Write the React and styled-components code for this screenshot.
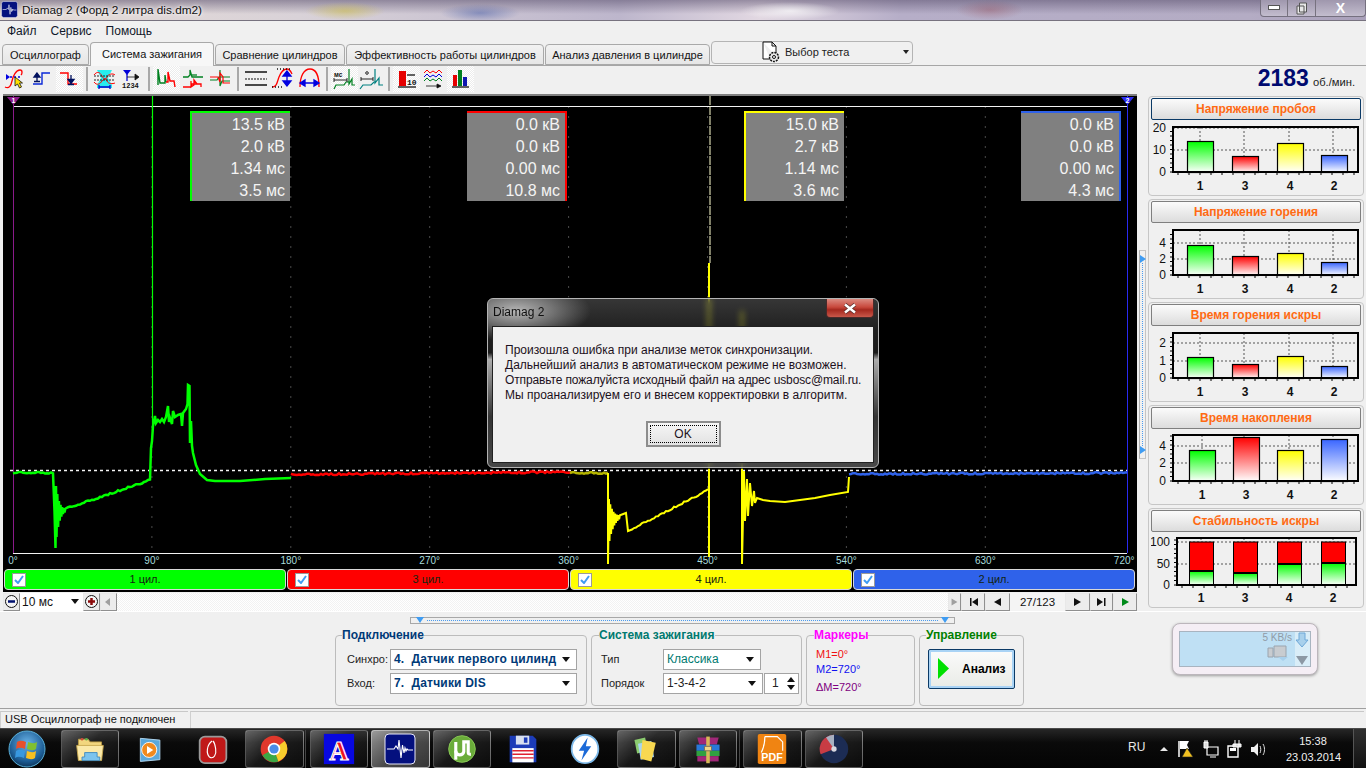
import React from "react";
import styled, { createGlobalStyle } from "styled-components";

const GlobalStyle = createGlobalStyle`
  html, body {
    margin: 0;
    padding: 0;
    overflow: hidden;
    background: #f0f0f0;
    font-family: "Liberation Sans", Arial, sans-serif;
    font-size: 12px;
    color: #111;
  }
  * { box-sizing: border-box; }
`;

const Page = styled.div`
  position: relative;
  width: 1366px;
  height: 768px;
  overflow: hidden;
  display: flex;
  flex-direction: column;
  background: #f0f0f0;
`;

/* ---------- title bar ---------- */
const TitleBar = styled.div`
  height: 21px;
  display: flex;
  align-items: center;
  padding-left: 1px;
  background:
    radial-gradient(ellipse 34px 10px at 990px 10px, rgba(150, 70, 80, 0.35), transparent),
    radial-gradient(ellipse 40px 9px at 345px 11px, rgba(205, 190, 90, 0.65), transparent),
    radial-gradient(ellipse 40px 9px at 480px 13px, rgba(80, 100, 170, 0.55), transparent),
    radial-gradient(ellipse 50px 9px at 790px 11px, rgba(255, 255, 255, 0.7), transparent),
    linear-gradient(180deg, rgba(90, 80, 110, 0.55), rgba(255, 255, 255, 0) 70%),
    linear-gradient(90deg, #e6dcd6 0, #d9d2d8 300px, #bdb6cc 620px, #e2d8e2 760px, #b6aec8 900px, #b4acc4 1250px, #a9a0ba 1366px);
  border-bottom: 1px solid #77727f;
`;
const AppIcon = styled.div`
  flex: none;
  display: flex;
  margin-right: 4px;
`;
const TitleText = styled.div`
  font-size: 11.8px;
  color: #101010;
  text-shadow: 0 0 6px #fff, 0 0 3px #fff;
`;
const WindowButtons = styled.div`
  margin-left: auto;
  align-self: flex-start;
  display: flex;
  height: 17px;
  width: 106px;
  border: 1px solid #75707f;
  border-top: 0;
  border-radius: 0 0 4px 4px;
  background: linear-gradient(180deg, #9f97ad, #c3bdce);
`;
const WindowButton = styled.div`
  width: ${({ $w }) => $w}px;
  display: flex;
  align-items: center;
  justify-content: center;
  border-right: 1px solid #77727f;
  color: #fff;
  font-size: 14px;
  font-weight: bold;
  &:last-child { border-right: 0; }
`;

/* ---------- menu, tabs ---------- */
const MenuBar = styled.div`
  height: 21px;
  display: flex;
  align-items: center;
  gap: 14px;
  padding-left: 7px;
  font-size: 12px;
  color: #10182a;
`;
const TabRow = styled.div`
  height: 24px;
  padding-left: 2px;
  display: flex;
  align-items: flex-end;
  border-bottom: 1px solid #a6a6a6;
`;
const Tab = styled.div`
  width: ${({ $w }) => $w}px;
  height: ${({ $active }) => ($active ? 24 : 21)}px;
  margin-right: 1px;
  margin-bottom: ${({ $active }) => ($active ? -1 : 0)}px;
  padding-top: ${({ $active }) => ($active ? 0 : 2)}px;
  display: flex;
  align-items: center;
  justify-content: center;
  font-size: 11px;
  white-space: nowrap;
  color: #141414;
  border: 1px solid #a9a9a9;
  border-bottom: ${({ $active }) => ($active ? "0" : "1px solid #a9a9a9")};
  border-radius: 4px 4px 0 0;
  background: ${({ $active }) => ($active ? "#f7f7f7" : "linear-gradient(180deg, #f2f2f2, #e6e6e6)")};
`;
const TestSelect = styled.div`
  width: 202px;
  height: 23px;
  margin-bottom: 1px;
  display: flex;
  align-items: center;
  padding-left: 48px;
  padding-right: 3px;
  gap: 3px;
  font-size: 11px;
  color: #222;
  background: #f0f0f0;
  border: 1px solid #b4b4b4;
  border-radius: 4px;
`;
const TinyArrow = styled.span`
  margin-left: auto;
  width: 0;
  height: 0;
  border-left: 3px solid transparent;
  border-right: 3px solid transparent;
  border-top: 4px solid #222;
`;

/* ---------- toolbar ---------- */
const ToolRow = styled.div`
  height: 28px;
  display: flex;
  align-items: center;
  padding: 0 0 2px 2px;
`;
const ToolButton = styled.div`
  flex: none;
  width: 27px;
  height: 26px;
  display: flex;
  align-items: center;
  justify-content: center;
  background: ${({ $on }) => ($on ? "repeating-conic-gradient(#ffffff 0 25%, #ececec 0 50%) 0 0 / 2px 2px" : "transparent")};
`;
const ToolSep = styled.div`
  flex: none;
  width: 2px;
  height: 24px;
  margin: 0 3px;
  background: #a8a8a8;
`;
const Rpm = styled.div`
  margin-left: auto;
  margin-right: 11px;
  display: flex;
  align-items: baseline;
  gap: 4px;
  font-size: 11.2px;
  color: #222;
`;
const RpmValue = styled.span`
  font-size: 23px;
  font-weight: bold;
  color: #000a70;
`;

/* ---------- work area ---------- */
const Workspace = styled.div`
  height: 517px;
  display: flex;
`;
const LeftColumn = styled.div`
  width: 1139px;
  padding-left: 3px;
  padding-right: 2px;
  display: flex;
  flex-direction: column;
`;
const ScopeFrame = styled.div`
  border-top: 2px solid #808080;
  background: #000;
`;
const ScopeCanvas = styled.div`
  position: relative;
  height: 471px;
  svg { display: block; }
`;
const ValueGrid = styled.div`
  position: absolute;
  left: 187px;
  top: 15px;
  display: grid;
  grid-template-columns: repeat(4, 100px);
  column-gap: 177px;
`;
const ValueBox = styled.div`
  height: 90px;
  padding: 1px 5px 0 0;
  background: #808080;
  color: #f4f4f4;
  font-size: 16px;
  line-height: 22px;
  text-align: right;
  border-top: 2px solid ${({ $color }) => $color};
  border-${({ $side }) => $side}: 2px solid ${({ $color }) => $color};
`;
const CylinderStrip = styled.div`
  height: 25px;
  display: flex;
  gap: 1px;
  padding: 2px 2px 2px 1px;
`;
const Cylinder = styled.div`
  position: relative;
  flex: 1;
  display: flex;
  align-items: center;
  justify-content: center;
  font-size: 11px;
  color: #14240f;
  background: ${({ $color }) => $color};
  border: 1px solid #d8d8d8;
  border-radius: 4px;
`;
const CheckBox = styled.div`
  position: absolute;
  left: 7px;
  top: 3px;
  width: 14px;
  height: 14px;
  display: flex;
  align-items: center;
  justify-content: center;
  background: #fff;
  border: 1px solid #9a9a9a;
`;
const ControlRow = styled.div`
  height: 18px;
  margin-top: 1px;
  display: flex;
  align-items: stretch;
`;
const SquareButton = styled.div`
  flex: none;
  width: ${({ $w }) => $w || 17}px;
  display: flex;
  align-items: center;
  justify-content: center;
  background: #ececec;
  border: 1px solid;
  border-color: #e8e8e8 #8f8f8f #8f8f8f #e8e8e8;
`;
const ScaleSelect = styled.div`
  flex: none;
  width: 63px;
  display: flex;
  align-items: center;
  justify-content: space-between;
  padding: 0 4px 0 2px;
  background: #fff;
  font-size: 12px;
`;
const Track = styled.div`
  flex: 1;
  background: repeating-conic-gradient(#ffffff 0 25%, #f2f2f2 0 50%) 0 0 / 2px 2px;
`;
const Counter = styled.div`
  flex: none;
  width: 55px;
  display: flex;
  align-items: center;
  justify-content: center;
  font-size: 11.5px;
  background: #f4f4f4;
`;
const DownArrow = styled.span`
  display: inline-block;
  width: 0;
  height: 0;
  flex: none;
  border-left: 4px solid transparent;
  border-right: 4px solid transparent;
  border-top: 5px solid #111;
`;

/* ---------- vertical splitter ---------- */
const SideSplitter = styled.div`
  flex: none;
  width: 7px;
  height: 209px;
  margin-top: 156px;
  padding-top: 4px;
  border: 1px solid #c4c4c4;
  border-left: 1px solid #b0b0b0;
  display: flex;
  flex-direction: column;
  align-items: center;
  justify-content: space-between;
  padding-bottom: 4px;
`;
const SideDots = styled.div`
  flex: 1;
  width: 1px;
  border-left: 1px dotted #4a9cf0;
`;

/* ---------- right charts ---------- */
const ChartColumn = styled.div`
  flex: none;
  width: 216px;
  margin-left: 2px;
  margin-top: 2px;
  display: flex;
  flex-direction: column;
  gap: 3px;
`;
const ChartPanel = styled.div`
  height: 100px;
  padding: 1px 2px 0;
  border: 1px solid #c6c6c6;
  border-radius: 4px;
  svg { display: block; margin-top: 1px; }
`;
const ChartTitle = styled.div`
  height: 22px;
  display: flex;
  align-items: center;
  justify-content: center;
  font-size: 12px;
  font-weight: bold;
  color: #ff6a13;
  background: linear-gradient(180deg, #fbfbfb, #dcdcdc);
  border: 1px solid ${({ $focus }) => ($focus ? "#0b3a66" : "#7f7f7f")};
  border-radius: 2px;
`;

/* ---------- bottom settings ---------- */
const BottomArea = styled.div`
  height: 98px;
  border-top: 1px solid #fff;
  padding-left: 335px;
  display: flex;
  flex-direction: column;
`;
const HSplitter = styled.div`
  width: 545px;
  height: 7px;
  margin: 5px 0 0 75px;
  padding: 0 5px;
  display: flex;
  align-items: center;
  gap: 3px;
  border: 1px solid #a8a8a8;
  background: #f0f0f0;
`;
const HDots = styled.div`
  flex: 1;
  height: 1px;
  border-top: 1px dotted #4a9cf0;
`;
const Groups = styled.div`
  display: flex;
  gap: 4px;
  margin-top: 5px;
`;
const Group = styled.fieldset`
  width: ${({ $w }) => $w}px;
  height: 77px;
  margin: 0;
  padding: ${({ $pad }) => $pad};
  border: 1px solid #bcbcbc;
  border-radius: 4px;
  min-width: 0;
`;
const GroupLegend = styled.legend`
  padding: 0;
  margin-left: ${({ $ml }) => $ml}px;
  font-size: 12px;
  line-height: 13px;
  font-weight: bold;
  color: ${({ $color }) => $color};
`;
const FieldRow = styled.div`
  display: flex;
  align-items: center;
  height: 21px;
  margin-bottom: 3px;
  font-size: 11px;
  color: #222;
`;
const FieldLabel = styled.div`
  flex: none;
  width: ${({ $w }) => $w}px;
`;
const SelectBox = styled.div`
  flex: none;
  width: ${({ $w }) => $w}px;
  height: 21px;
  display: flex;
  align-items: center;
  justify-content: space-between;
  padding: 0 6px 0 3px;
  background: #fff;
  border: 1px solid #a4a4a4;
  font-size: 12px;
  font-weight: ${({ $bold }) => ($bold ? "bold" : "normal")};
  letter-spacing: ${({ $bold }) => ($bold ? "0.2px" : "0")};
  color: ${({ $color }) => $color || "#222"};
  white-space: pre;
  overflow: hidden;
`;
const SpinBox = styled.div`
  flex: none;
  width: 35px;
  height: 21px;
  margin-left: 1px;
  display: flex;
  align-items: center;
  justify-content: space-between;
  padding: 0 3px 0 7px;
  font-size: 12px;
  background: #fff;
  border: 1px solid #a4a4a4;
`;
const SpinArrows = styled.div`
  display: flex;
  flex-direction: column;
  gap: 3px;
`;
const UpArrow = styled.span`
  display: block;
  width: 0;
  height: 0;
  border-left: 4px solid transparent;
  border-right: 4px solid transparent;
  border-bottom: 5px solid #111;
`;
const MarkerLine = styled.div`
  font-size: 11px;
  height: ${({ $h }) => $h}px;
  color: ${({ $color }) => $color};
`;
const RunButton = styled.div`
  width: 87px;
  height: 40px;
  display: flex;
  align-items: center;
  gap: 13px;
  padding-left: 9px;
  font-size: 12px;
  font-weight: bold;
  color: #000;
  background: linear-gradient(180deg, #fbfbfb, #e9ebe6);
  border: 1px solid #0b3a66;
  border-radius: 2px;
  box-shadow: inset 0 0 0 2px #a9d3f5;
`;

/* ---------- status ---------- */
const StatusBar = styled.div`
  height: 20px;
  display: flex;
  align-items: flex-end;
  border-top: 1px solid #a0a0a0;
  font-size: 11px;
  color: #111;
`;
const StatusCell = styled.div`
  width: ${({ $w }) => $w}px;
  height: 17px;
  padding-left: 4px;
  border-left: 1px solid #d0d0d0;
  border-top: 1px solid #c8c8c8;
  margin-right: 2px;
  line-height: 15px;
  white-space: nowrap;
  flex: ${({ $w }) => ($w ? "none" : "1")};
`;

/* ---------- taskbar ---------- */
const Taskbar = styled.div`
  height: 40px;
  padding-left: 59px;
  display: flex;
  align-items: center;
  position: relative;
  color: #fff;
  background: linear-gradient(180deg, #262626 0, #0a0a0a 35%, #040404 100%);
  border-top: 1px solid #4a4a4a;
`;
const StartOrb = styled.svg`
  position: absolute;
  left: 7px;
  top: 0;
`;
const TaskItem = styled.div`
  flex: none;
  width: 58.5px;
  height: 38px;
  margin: 0 1.5px;
  display: flex;
  align-items: center;
  justify-content: center;
  border-radius: 3px;
  ${({ $state }) =>
    $state === "open" &&
    `background: linear-gradient(135deg, rgba(255,255,255,.3), rgba(255,255,255,.08) 45%, rgba(255,255,255,.03));
     border: 1px solid rgba(255,255,255,.28);`}
  ${({ $state }) =>
    $state === "active" &&
    `background: linear-gradient(135deg, rgba(255,255,255,.55), rgba(255,255,255,.28) 50%, rgba(255,255,255,.2));
     border: 1px solid rgba(255,255,255,.55);`}
`;
const TaskGap = styled.div`
  flex: none;
  width: 3px;
  height: 38px;
  border-left: 1px solid #444;
`;
const Tray = styled.div`
  margin-left: auto;
  height: 100%;
  display: flex;
  align-items: center;
`;
const TrayLang = styled.div`
  width: 27px;
  font-size: 12px;
  margin-bottom: 4px;
  color: #e8e8e8;
`;
const TrayIcons = styled.div`
  display: flex;
  align-items: center;
  gap: 7px;
  margin-left: 4px;
`;
const Clock = styled.div`
  width: 54px;
  margin-left: 20px;
  text-align: center;
  font-size: 11px;
  line-height: 16px;
  color: #f0f0f0;
`;
const ShowDesktop = styled.div`
  width: 13px;
  height: 100%;
  margin-left: 13px;
  border-left: 1px solid #555;
  background: linear-gradient(180deg, #303030, #111);
`;

/* ---------- floating things ---------- */
const NetWidget = styled.div`
  position: absolute;
  left: 1172px;
  top: 623px;
  width: 146px;
  height: 52px;
  padding: 7px 6px;
  background: #f5eef5;
  border: 1px solid #bcb6bc;
  border-radius: 8px;
  box-shadow: 0 1px 3px rgba(0, 0, 0, 0.35);
  display: flex;
`;
const NetScreen = styled.div`
  flex: 1;
  display: flex;
  flex-direction: column;
  align-items: flex-end;
  padding: 0 3px;
  background: #bfe0f4;
  border: 1px solid #a8b4c0;
  border-right: 0;
  font-size: 10px;
  color: #8f9aa6;
`;
const NetSide = styled.div`
  width: 16px;
  display: flex;
  flex-direction: column;
  justify-content: space-between;
  background: #d9edf8;
  border: 1px solid #a8b4c0;
  border-left: 0;
`;

const Dialog = styled.div`
  position: absolute;
  left: 487px;
  top: 298px;
  width: 392px;
  height: 170px;
  padding: 0 4px 4px;
  display: flex;
  flex-direction: column;
  border: 1px solid #b4b4b4;
  border-radius: 6px;
  backdrop-filter: blur(3px);
  background:
    radial-gradient(ellipse 75px 30px at 28px 12px, rgba(190, 190, 190, 0.95), rgba(140, 140, 140, 0.5) 65%, transparent),
    linear-gradient(180deg, rgba(120, 120, 120, 0.45) 0, rgba(60, 60, 60, 0.55) 18%, rgba(60, 60, 60, 0.45) 32%, rgba(215, 215, 215, 0.8) 36%, rgba(70, 70, 70, 0.75) 70%, rgba(90, 90, 90, 0.8) 100%);
  box-shadow: 0 0 0 1px rgba(0, 0, 0, 0.7);
`;
const DialogHead = styled.div`
  height: 27px;
  display: flex;
  align-items: flex-start;
`;
const DialogTitle = styled.div`
  padding: 6px 0 0 1px;
  font-size: 12px;
  color: #101010;
`;
const DialogClose = styled.div`
  margin-left: auto;
  width: 48px;
  height: 19px;
  display: flex;
  align-items: center;
  justify-content: center;
  background: linear-gradient(180deg, #dc8a80 0, #c8483c 45%, #a5281e 60%, #c8584a 100%);
  border: 1px solid #4a2a2a;
  border-top: 0;
  border-radius: 0 0 4px 4px;
`;
const DialogBody = styled.div`
  flex: 1;
  padding: 16px 0 0 12px;
  display: flex;
  flex-direction: column;
  background: #f0f0f0;
  border: 1px solid #222;
  color: #1c1020;
  font-size: 12px;
  line-height: 15px;
`;
const DialogLine = styled.div`
  white-space: nowrap;
  letter-spacing: ${({ $tight }) => ($tight ? "-0.13px" : "0")};
`;
const OkButton = styled.div`
  align-self: center;
  width: 75px;
  height: 26px;
  margin: 18px 0 0 -12px;
  display: flex;
  align-items: center;
  justify-content: center;
  background: linear-gradient(180deg, #f6f6f6, #e2e2e2);
  border: 2px solid #8c8c8c;
  outline: 1px dotted #000;
  outline-offset: -5px;
  font-size: 12px;
`;

/* ---------- drawings ---------- */
const GREEN = "#00ff00";
const RED = "#ff0000";
const YELLOW = "#ffff00";
const BLUE = "#2f62ea";

const ring = (x0, x1, cy0, cy1, amp, decay) => {
  const pts = [];
  let sign = 1;
  for (let x = x0; x <= x1; x += 0.8) {
    const t = (x - x0) / (x1 - x0);
    pts.push([x, cy0 + (cy1 - cy0) * t + sign * amp * Math.exp(-decay * t)]);
    sign = -sign;
  }
  return pts;
};
const fuzz = (x0, x1, y0, y1, seed) => {
  const pts = [];
  for (let x = x0, i = seed; x <= x1; x += 2, i++) {
    pts.push([x, y0 + ((y1 - y0) * (x - x0)) / (x1 - x0) + Math.sin(i * i * 0.7) * 0.8]);
  }
  return pts;
};
const toPts = (pts) => pts.map((p) => p.join(",")).join(" ");

const greenTrace = [
  ...fuzz(13, 54, 471.7, 471.7, 1),
  [54.5, 510],
  [55.5, 547],
  [56, 485],
  ...ring(56.5, 66, 512, 509, 24, 3),
  ...fuzz(68, 150, 507, 479, 4),
  [151, 447], [152, 440], [153, 425],
  [155, 415], [156, 422], [158, 419], [160, 421], [162, 418], [164, 421], [166, 416],
  [168, 405], [169, 421], [170, 417], [172, 423], [173, 410], [175, 416], [178, 414],
  [181, 413], [182, 425], [183, 412], [186, 408], [187.5, 403], [188, 384], [189.5, 385],
  [190, 442], [191, 420], [192, 445], [193, 452], [196, 464], [200, 473], [207, 479],
  [215, 480], [240, 480], [265, 478], [291, 477],
];
const yellowTrace = [
  [608, 472], [608, 563], [609, 498],
  ...ring(609.5, 620, 520, 516, 20, 2.5),
  [626, 512], [628, 530],
  ...fuzz(630, 708, 529, 489, 7),
];
const yellowTrace2 = [
  [742, 310], [742, 563], [744, 470], [745, 520], [747, 478], [748, 515], [750, 482],
  [752, 505], [754, 490], [755, 502], [757, 497], [763, 499], [770, 500], [785, 501],
  [800, 499], [815, 497], [830, 494], [848, 491], [849, 476],
];

const ScopeDrawing = () => {
  const ticks = [0, 1, 2, 3, 4, 5, 6, 7, 8];
  return (
    <svg width="1134" height="471" viewBox="3 95 1134 471">
      {ticks.slice(1, 8).map((i) => (
        <line key={i} x1={13 + i * 138.9} x2={13 + i * 138.9} y1="105" y2="552" stroke="#4a4a4a" strokeDasharray="2 8" />
      ))}
      <line x1="13" x2="1127" y1="105.5" y2="105.5" stroke="#f2f2f2" />
      <line x1="13" x2="1127" y1="552.5" y2="552.5" stroke="#f2f2f2" />
      <line x1="13.5" x2="13.5" y1="95" y2="552" stroke="#8a1a8a" />
      <line x1="1127.5" x2="1127.5" y1="95" y2="552" stroke="#2a2af0" />
      <line x1="710" x2="710" y1="95" y2="262" stroke="#ffffd0" strokeDasharray="9 1" />
      <line x1="152.5" x2="152.5" y1="95" y2="430" stroke={GREEN} strokeWidth="1.2" />
      <line x1="10" x2="1127" y1="469.5" y2="469.5" stroke="#f4f4f4" strokeWidth="1.6" strokeDasharray="3 3" />
      <polygon points="7,96 20,96 13.5,104" fill="#8a1a8a" />
      <polygon points="1121,96 1134,96 1127.5,104" fill="#2a2af0" />
      <text x="13.5" y="102" fontSize="7" fontWeight="bold" fill="#fff" textAnchor="middle">1</text>
      <text x="1127.5" y="102" fontSize="7" fontWeight="bold" fill="#fff" textAnchor="middle">2</text>

      <polyline points={toPts(fuzz(291, 572, 473.5, 471, 5))} fill="none" stroke={RED} strokeWidth="2.5" />
      <polyline points={toPts(fuzz(570, 608, 472, 472, 3))} fill="none" stroke="#b4b400" strokeWidth="2.5" />
      <polyline points={toPts(fuzz(849, 1127, 473, 472, 2))} fill="none" stroke={BLUE} strokeWidth="2.5" />
      <polyline points={toPts(greenTrace)} fill="none" stroke={GREEN} strokeWidth="2.5" />
      <polyline points={toPts(yellowTrace)} fill="none" stroke={YELLOW} strokeWidth="2" />
      <line x1="709" x2="709" y1="262" y2="556" stroke={YELLOW} strokeWidth="2" />
      <polyline points={toPts(yellowTrace2)} fill="none" stroke={YELLOW} strokeWidth="2" />

      {ticks.map((i) => (
        <text key={i} x={13 + i * 138.9} y="563" fontSize="10" fill="#a8dcdc" textAnchor="middle">
          {i * 90}°
        </text>
      ))}
    </svg>
  );
};

const BarGradients = () => (
  <defs>
    {[["g", "#00ff00"], ["r", "#ff0000"], ["y", "#ffff00"], ["b", "#3a66ff"]].map(([id, c]) => (
      <linearGradient key={id} id={`bar-${id}`} x1="0" y1="0" x2="0" y2="1">
        <stop offset="0" stopColor={c} />
        <stop offset="1" stopColor="#ffffff" />
      </linearGradient>
    ))}
  </defs>
);

const Chart = ({ plot, yTicks, gridX, bars, stacked }) => {
  const { left, right, top, bottom } = plot;
  const minor = [];
  for (let y = bottom; y > top; y -= 4.5) minor.push(y);
  const minorX = [];
  for (let x = left + 5; x < right; x += 11) minorX.push(x);
  return (
    <svg width="210" height="73" viewBox="0 0 210 73">
      <BarGradients />
      {yTicks.slice(1).map(([, y]) => (
        <line key={y} x1={left} x2={right} y1={y} y2={y} stroke="#555" strokeDasharray="2 2" />
      ))}
      {gridX.map((x) => (
        <line key={x} x1={x} x2={x} y1={top} y2={bottom} stroke="#555" strokeDasharray="2 2" />
      ))}
      {bars.map((b) =>
        stacked ? (
          <g key={b.label}>
            <rect x={b.x + 0.5} y={top + 4} width={b.w} height={b.top - top - 4} fill={RED} stroke="#000" />
            <rect x={b.x + 0.5} y={b.top} width={b.w} height={bottom - b.top} fill="url(#bar-g)" stroke="#000" />
            <rect x={b.x} y={b.top - 1} width={b.w + 1} height="2" fill="#000" />
          </g>
        ) : (
          <rect key={b.label} x={b.x + 0.5} y={b.top + 0.5} width={b.w} height={bottom - b.top} fill={`url(#bar-${b.c})`} stroke="#000" strokeWidth="1.2" />
        )
      )}
      {minor.map((y) => (
        <line key={y} x1={left - 3} x2={left} y1={y} y2={y} stroke="#000" />
      ))}
      {minorX.map((x) => (
        <line key={x} x1={x} x2={x} y1={bottom} y2={bottom + 3} stroke="#000" />
      ))}
      <rect x={left} y={top} width={right - left} height={bottom - top} fill="none" stroke="#000" strokeWidth="2" />
      {yTicks.map(([label, y]) => (
        <text key={label} x={left - 7} y={y + 4} fontSize="12" textAnchor="end" fill="#111">
          {label}
        </text>
      ))}
      {bars.map((b) => (
        <text key={b.label} x={b.x + b.w / 2} y="69" fontSize="12" fontWeight="bold" textAnchor="middle" fill="#111">
          {b.label}
        </text>
      ))}
    </svg>
  );
};

const barSet = (xs, w, tops) =>
  ["1", "3", "4", "2"].map((label, i) => ({ label, x: xs[i], w, top: tops[i], c: ["g", "r", "y", "b"][i] }));

const CHARTS = [
  {
    title: "Напряжение пробоя",
    focus: true,
    plot: { left: 22, right: 207, top: 6, bottom: 51 },
    yTicks: [["0", 51], ["10", 29], ["20", 7]],
    gridX: [49, 93, 138, 182],
    bars: barSet([36, 81, 126, 170], 26, [20, 35, 22, 34]),
  },
  {
    title: "Напряжение горения",
    plot: { left: 22, right: 207, top: 6, bottom: 51 },
    yTicks: [["0", 51], ["2", 35], ["4", 19]],
    gridX: [49, 93, 138, 182],
    bars: barSet([36, 81, 126, 170], 26, [21, 32, 29, 38]),
  },
  {
    title: "Время горения искры",
    plot: { left: 22, right: 207, top: 6, bottom: 51 },
    yTicks: [["0", 51], ["1", 34], ["2", 16]],
    gridX: [49, 93, 138, 182],
    bars: barSet([36, 81, 126, 170], 26, [30, 37, 29, 39]),
  },
  {
    title: "Время накопления",
    plot: { left: 22, right: 207, top: 5, bottom: 51 },
    yTicks: [["0", 51], ["2", 33], ["4", 16]],
    gridX: [51, 93, 138, 182],
    bars: barSet([38, 82, 126, 170], 26, [20, 7, 20, 9]),
  },
  {
    title: "Стабильность искры",
    stacked: true,
    plot: { left: 26, right: 205, top: 5, bottom: 52 },
    yTicks: [["0", 52], ["50", 31], ["100", 9]],
    gridX: [50, 93, 138, 182],
    bars: barSet([38, 82, 126, 170], 24, [38, 40, 31, 30]),
  },
];

const I = ({ children }) => (
  <svg width="27" height="25" viewBox="0 0 27 25" fill="none" strokeWidth="1.3">
    {children}
  </svg>
);

const TOOL_ICONS = {
  cursor: (
    <I>
      <path d="M3 21c4 2 6-1 7-6s4-11 8-11c3 0 2 4 1 5" stroke={RED} />
      <path d="M8 11h12" stroke="#0000e0" strokeDasharray="2 2" />
      <path d="M4 8l4 3-4 3z" fill="#0000e0" />
      <path d="M13 11l0 9 2.5-2 2 4 2-1-2-4 3 0z" fill="#ffe000" stroke="#111" strokeWidth="0.8" />
    </I>
  ),
  stepUp: (
    <I>
      <path d="M4 18h9V7h8" stroke="#0a28d8" strokeWidth="1.4" />
      <path d="M8 7l-3 4h6zM8 10v5M5 15.5h6" stroke="#00105e" fill="#00105e" />
    </I>
  ),
  stepDown: (
    <I>
      <path d="M4 7h8v11h9" stroke={RED} strokeWidth="1.4" />
      <path d="M15 9v5M12 13.5h6l-3 4zM12 18.5h6" stroke="#00105e" fill="#00105e" />
    </I>
  ),
  funnel: (
    <I>
      <path d="M6 4h15l-4 8 4 7v3H6v-3l4-7z" fill="#26eeee" />
      <path d="M3 9c3-4 6-3 8 1s4 4 5 1 6-4 8-2M3 16c3 4 6 2 8-1s4-3 5 0 6 3 8 2" stroke={RED} strokeWidth="1" />
      <path d="M3 10h21M3 14h21" stroke="#111" strokeDasharray="2 1" strokeWidth="0.9" />
      <path d="M8 21h11M8 19v4M19 19v4" stroke="#0000d0" />
    </I>
  ),
  order: (
    <I>
      <path d="M5 4h8l-4 5z" fill="#0000d8" />
      <path d="M9 8v7" stroke="#0000d8" />
      <path d="M9 11h11M17 8l4 3-4 3z" stroke="#111" fill="#111" strokeWidth="0.8" />
      <text x="4" y="22" fontSize="7" fontWeight="bold" fontFamily="Liberation Mono" fill="#111">1234</text>
    </I>
  ),
  pulses: (
    <I>
      <path d="M5 19V3l2 14h5V9l1 7" stroke="#008020" strokeWidth="1.4" />
      <path d="M13 16h2V6l2 9h4l1 6" stroke={RED} strokeWidth="1.4" />
    </I>
  ),
  rows: (
    <I>
      <path d="M3 11h5l2-2V4l2 7h11" stroke="#008020" strokeWidth="1.3" />
      <path d="M12 9h5" stroke="#008020" />
      <path d="M3 21h8l1-3h9v3M11 15v6l3-2V14l3 4" stroke={RED} strokeWidth="1.3" />
    </I>
  ),
  mixed: (
    <I>
      <path d="M3 14h7l2-3h11M13 4v16l2-5h8" stroke="#008020" strokeWidth="1.2" />
      <path d="M3 11h8l2 5V7l3 4v6h7" stroke={RED} strokeWidth="1.2" />
    </I>
  ),
  levels: (
    <I>
      <path d="M3 6h22M3 19h22" stroke="#111" strokeWidth="1.4" />
      <path d="M3 13h22" stroke="#111" strokeDasharray="2 1" strokeWidth="1.2" />
    </I>
  ),
  slope: (
    <I>
      <path d="M3 21c5 0 5-5 7-10s4-8 8-8c3 0 4 3 5 5" stroke={RED} />
      <path d="M3 21h12M8 3h13" stroke="#111" strokeDasharray="1 2" />
      <path d="M18 5l-4 5h8zM18 20l-4-5h8zM18 9v7" stroke="#0000e0" fill="#0000e0" />
    </I>
  ),
  arch: (
    <I>
      <path d="M4 21c0-11 4-18 10-18s9 7 9 18" stroke={RED} />
      <path d="M4 17l5-3v6zM23 17l-5-3v6zM8 17h11" stroke="#0000e0" fill="#0000e0" />
    </I>
  ),
  timeMs: (
    <I>
      <path d="M18 3v15l3-5v6h3" stroke="#008020" strokeWidth="1.2" />
      <path d="M3 23l2-4h8l2-3h3" stroke="#008020" strokeWidth="1.2" />
      <text x="3" y="11" fontSize="6.5" fontWeight="bold" fill="#111">мс</text>
      <path d="M3 14h13M3 12v4M16 12v4" stroke="#111" strokeWidth="0.9" />
    </I>
  ),
  timeDeg: (
    <I>
      <path d="M17 3v14l4-5v7h4" stroke="#008080" strokeWidth="1.2" />
      <path d="M2 23l3-4h8l3-3h2" stroke="#008080" strokeWidth="1.2" />
      <circle cx="9" cy="7" r="1.3" stroke="#111" strokeWidth="0.9" />
      <path d="M3 13h12M3 11v4M15 11v4" stroke="#111" strokeWidth="0.9" />
    </I>
  ),
  barTen: (
    <I>
      <path fill="#e60000" d="M6 5h7v15H6z" />
      <path d="M14 9h8" stroke="#111" />
      <text x="14" y="19" fontSize="8" fontWeight="bold" fontFamily="Liberation Mono" fill="#111">10</text>
      <path d="M5 21h18" stroke="#111" />
    </I>
  ),
  waves: (
    <I>
      <path d="M4 7l3-3 3 3 3-2 3 2 3-3 3 3" stroke={RED} strokeWidth="1" />
      <path d="M4 11l3-3 3 3 3-2 3 2 3-3 3 3" stroke="#0000e0" strokeWidth="1" />
      <path d="M4 15l3-3 3 3 3-2 3 2 3-3 3 3" stroke="#008020" strokeWidth="1" />
      <path d="M6 20h14M17 18l4 2-4 2z" stroke="#111" fill="#111" strokeWidth="0.8" />
    </I>
  ),
  bars: (
    <I>
      <path fill="#e60000" d="M6 9h4v11H6z" />
      <path fill="#008020" d="M11 4h4v16h-4z" />
      <path fill="#1018b0" d="M16 11h4v9h-4z" />
      <path d="M5 21h17" stroke="#111" />
    </I>
  ),
};

const TOOLS = [
  ["cursor"], ["stepUp"], ["stepDown", true], "|",
  ["funnel"], ["order"], "|",
  ["pulses", true], ["rows"], ["mixed"], "|",
  ["levels"], ["slope"], ["arch"], "|",
  ["timeMs", true], ["timeDeg"], "|",
  ["barTen", true], ["waves"], ["bars", true],
];

const WaveLogo = ({ size }) => (
  <svg width={size} height={size} viewBox="0 0 32 32">
    <rect x="1" y="1" width="30" height="30" rx="4" fill="#04107e" stroke="#e8e8f8" />
    <path d="M3 16h7l2-3 2 3 1-9 2 18 1.500-13 1.500 8 1-5 1 3 1-2 1 1h5" fill="none" stroke="#fff" strokeWidth="1.1" />
  </svg>
);

const NavGlyph = ({ kind, color = "#111" }) => {
  const d = {
    first: "M3 2v8h1.500V2zM11 2L5 6l6 4z",
    prev: "M10 2L3 6l7 4z",
    next: "M3 2l7 4-7 4z",
    last: "M2 2l6 4-6 4zM9 2v8h1.500V2z",
    scrollL: "M8 2L3 6l5 4z",
  }[kind];
  return (
    <svg width="13" height="12" viewBox="0 0 13 12">
      <path d={d} fill={color} />
    </svg>
  );
};

const RoundGlyph = ({ plus }) => (
  <svg width="15" height="15" viewBox="0 0 15 15">
    <circle cx="7.500" cy="7.500" r="6" fill="#f4f4f4" stroke="#111" />
    <path d="M4 7.500h7" stroke={plus ? "#8a0a0a" : "#00106e"} strokeWidth="2.500" />
    {plus && <path d="M7.500 4v7" stroke="#8a0a0a" strokeWidth="2.500" />}
  </svg>
);

const TaskIcon = ({ children }) => (
  <svg width="32" height="32" viewBox="0 0 36 36">
    {children}
  </svg>
);

const TASK_ITEMS = [
  {
    state: "open",
    icon: (
      <TaskIcon>
        <path d="M5 7h11l2 3h13v20H5z" fill="#f2d67e" stroke="#b99a44" />
        <path d="M3 14h30l-2 17H5z" fill="#fbe9a8" stroke="#c8a850" />
        <path d="M12 27v-5h14v5h3v4H9v-4z" fill="#7cc4ee" stroke="#3f88bc" />
        <circle cx="9" cy="7" r="1.500" fill="#d04a3a" />
        <circle cx="14" cy="7" r="1.500" fill="#5cb04a" />
      </TaskIcon>
    ),
  },
  {
    icon: (
      <TaskIcon>
        <path d="M6 6l22 2v22L6 32z" fill="#5aa8dc" stroke="#b8dcf4" />
        <circle cx="16" cy="19" r="8.500" fill="#f08a1e" stroke="#fff" />
        <path d="M13.500 14.500l7 4.500-7 4.500z" fill="#fff" />
      </TaskIcon>
    ),
  },
  {
    icon: (
      <TaskIcon>
        <rect x="3" y="4" width="30" height="30" rx="6" fill="#c01818" stroke="#999" strokeWidth="2" />
        <path d="M17 9c-6 4-7 14-3 18 5 3 8-3 7-9s-1-7-3-9" fill="none" stroke="#fff" strokeWidth="1.300" />
      </TaskIcon>
    ),
  },
  {
    state: "open",
    icon: (
      <TaskIcon>
        <circle cx="18" cy="18" r="15" fill="#e0382c" />
        <path d="M18 18L5 25a15 15 0 0 0 18 7z" fill="#3aa845" />
        <path d="M18 18l5 14a15 15 0 0 0 10-14 15 15 0 0 0-3-9z" fill="#f8cc2c" />
        <circle cx="18" cy="18" r="7" fill="#fff" />
        <circle cx="18" cy="18" r="5.200" fill="#4a8ce8" />
      </TaskIcon>
    ),
  },
  "gap",
  {
    state: "open",
    icon: (
      <TaskIcon>
        <rect x="1" y="1" width="34" height="34" fill="#0808e0" />
        <text x="18" y="30" fontSize="30" fontWeight="bold" fontFamily="Liberation Serif" textAnchor="middle" fill="#f01020" stroke="#fff" strokeWidth="1.300">A</text>
      </TaskIcon>
    ),
  },
  { state: "active", icon: <WaveLogo size={32} /> },
  {
    state: "open",
    icon: (
      <TaskIcon>
        <circle cx="18" cy="18" r="15" fill="#6aac3a" stroke="#8ccc58" />
        <path d="M11 10v10c0 6 8 6 9 1V10h5v12c0 2 1 2 3 2" fill="none" stroke="#fff" strokeWidth="3.500" />
        <path d="M11 20v10" stroke="#fff" strokeWidth="3.500" />
      </TaskIcon>
    ),
  },
  {
    icon: (
      <TaskIcon>
        <path d="M3 3h26l4 4v26H3z" fill="#1c3cb8" />
        <path d="M10 3h15v10H10z" fill="#d8e0f0" />
        <path d="M19 5h4v6h-4z" fill="#1c3cb8" />
        <path d="M6 17h24v16H6z" fill="#fff" />
        <path d="M6 20h24M6 24h24M6 28h24" stroke="#e02030" strokeWidth="1.600" />
      </TaskIcon>
    ),
  },
  {
    icon: (
      <TaskIcon>
        <ellipse cx="18" cy="18" rx="15" ry="16" fill="#fff" stroke="#7cb8e8" strokeWidth="2" />
        <path d="M21 5L11 20h6l-3 11 11-16h-6z" fill="#1c6ad8" />
      </TaskIcon>
    ),
  },
  {
    state: "open",
    icon: (
      <TaskIcon>
        <path d="M5 8l12-3 3 15-12 3z" fill="#8ccc70" />
        <path d="M9 12l15-3 3 18-15 3z" fill="#a8d4f0" />
        <path d="M14 8l15 3-5 21-12-3z" fill="#f8d850" />
      </TaskIcon>
    ),
  },
  {
    state: "open",
    icon: (
      <TaskIcon>
        <path d="M6 5h24l-2 8H8z" fill="#a02878" />
        <path d="M5 13h26v7H5z" fill="#2878d8" />
        <path d="M5 20h26v6H5z" fill="#30a040" />
        <path d="M6 26h24v6H6z" fill="#a02878" />
        <path d="M16 4h4v30h-4z" fill="#d8b858" />
        <path d="M14 15h8v5h-8z" fill="#f0d888" stroke="#765" />
      </TaskIcon>
    ),
  },
  "gap",
  {
    state: "open",
    icon: (
      <TaskIcon>
        <rect x="2" y="1" width="32" height="34" rx="2" fill="#f08412" />
        <path d="M6 22c3-6 4-12 4-18M10 4h14l6 6v10" fill="none" stroke="#fff" strokeWidth="1.300" />
        <text x="18" y="31" fontSize="12" fontWeight="bold" textAnchor="middle" fill="#fff">PDF</text>
      </TaskIcon>
    ),
  },
  {
    state: "open",
    icon: (
      <TaskIcon>
        <circle cx="18" cy="18" r="16" fill="#1c2c54" />
        <path d="M18 2a16 16 0 0 0-15 22l15-6z" fill="#c83c44" />
        <path d="M18 2a16 16 0 0 0-9 3l9 13z" fill="#a8b0c0" />
        <circle cx="18" cy="18" r="3" fill="#d8d8e0" />
      </TaskIcon>
    ),
  },
];

const TrayGlyphs = () => (
  <TrayIcons>
    <svg width="11" height="16" viewBox="0 0 11 16">
      <path d="M1 10h8L5 6z" fill="#e8e8e8" />
    </svg>
    <svg width="18" height="20" viewBox="0 0 18 20">
      <path d="M2 2v16" stroke="#fff" strokeWidth="1.500" />
      <path d="M3 2h9l-2 4 2 4H3z" fill="#fff" />
      <path d="M10 9l6 9H5z" fill="#f0c020" stroke="#222" strokeWidth="0.600" />
    </svg>
    <svg width="17" height="20" viewBox="0 0 17 20">
      <path d="M5 8h11v8H5zM8 18h6" fill="none" stroke="#fff" strokeWidth="1.200" />
      <path d="M2 3h4v6H2zM3 1v3M5 1v3" stroke="#fff" strokeWidth="1" fill="#ddd" />
    </svg>
    <svg width="17" height="20" viewBox="0 0 17 20">
      <path d="M2 7h10v11H2z" fill="none" stroke="#fff" strokeWidth="1.400" />
      <path d="M4 9h6v3H4z" fill="#fff" />
      <path d="M9 1v6M13 1v6M7 5h8v3H7z" stroke="#fff" fill="#ddd" />
    </svg>
    <svg width="16" height="20" viewBox="0 0 16 20">
      <path d="M1 8h3l4-4v13l-4-4H1z" fill="#f0f0f0" />
      <path d="M10 7c1 2 1 5 0 7M13 5c2 3 2 8 0 11" fill="none" stroke="#ddd" />
    </svg>
  </TrayIcons>
);

const VALUES = [
  { color: GREEN, side: "left", lines: ["13.5 кВ", "2.0 кВ", "1.34 мс", "3.5 мс"] },
  { color: RED, side: "right", lines: ["0.0 кВ", "0.0 кВ", "0.00 мс", "10.8 мс"] },
  { color: YELLOW, side: "left", lines: ["15.0 кВ", "2.7 кВ", "1.14 мс", "3.6 мс"] },
  { color: BLUE, side: "right", lines: ["0.0 кВ", "0.0 кВ", "0.00 мс", "4.3 мс"] },
];
const CYLINDERS = [
  { label: "1 цил.", color: GREEN },
  { label: "3 цил.", color: RED },
  { label: "4 цил.", color: YELLOW },
  { label: "2 цил.", color: BLUE },
];
const TABS = [
  { label: "Осциллограф", w: 87 },
  { label: "Система зажигания", w: 124, active: true },
  { label: "Сравнение цилиндров", w: 130 },
  { label: "Эффективность работы цилиндров", w: 198 },
  { label: "Анализ давления в цилиндре", w: 165 },
];

const SmallDown = () => (
  <svg width="8" height="6" viewBox="0 0 8 6">
    <path d="M0 0h8L4 6z" fill="#3f9cf2" />
  </svg>
);
const SideArrow = () => (
  <svg width="6" height="8" viewBox="0 0 6 8">
    <path d="M0 0l6 4-6 4z" fill="#3f9cf2" />
  </svg>
);

const App = () => {
  return (
    <Page>
      <GlobalStyle />
      <TitleBar>
        <AppIcon><WaveLogo size={17} /></AppIcon>
        <TitleText>Diamag 2 (Форд 2 литра dis.dm2)</TitleText>
        <WindowButtons>
          <WindowButton $w={28}>
            <svg width="12" height="6" viewBox="0 0 12 6"><rect x="0.5" y="0.5" width="11" height="4" fill="#fff" stroke="#555" /></svg>
          </WindowButton>
          <WindowButton $w={28}>
            <svg width="12" height="13" viewBox="0 0 12 13">
              <path d="M3.500 1h7v9h-7zM1 4h7v8H1z" fill="#e8e8e8" stroke="#555" />
            </svg>
          </WindowButton>
          <WindowButton $w={50}>X</WindowButton>
        </WindowButtons>
      </TitleBar>

      <MenuBar>
        <span>Файл</span>
        <span>Сервис</span>
        <span>Помощь</span>
      </MenuBar>

      <TabRow>
        {TABS.map((t) => (
          <Tab key={t.label} $w={t.w} $active={t.active}>{t.label}</Tab>
        ))}
        <TestSelect>
          <svg width="22" height="22" viewBox="0 0 22 22">
            <path d="M3 1h9l4 4v10M3 1v17h7M12 1v4h4" fill="#fff" stroke="#111" />
            <circle cx="14" cy="16" r="4.500" fill="#e8e8e8" stroke="#111" strokeDasharray="2 1" strokeWidth="1.500" />
            <circle cx="14" cy="16" r="1.500" fill="#fff" stroke="#111" />
          </svg>
          Выбор теста
          <TinyArrow />
        </TestSelect>
      </TabRow>

      <ToolRow>
        {TOOLS.map((t, i) =>
          t === "|" ? (
            <ToolSep key={i} />
          ) : (
            <ToolButton key={t[0]} $on={t[1]}>{TOOL_ICONS[t[0]]}</ToolButton>
          )
        )}
        <Rpm>
          <RpmValue>2183</RpmValue> об./мин.
        </Rpm>
      </ToolRow>

      <Workspace>
        <LeftColumn>
          <ScopeFrame>
            <ScopeCanvas>
              <ScopeDrawing />
              <ValueGrid>
                {VALUES.map((v) => (
                  <ValueBox key={v.color} $color={v.color} $side={v.side}>
                    {v.lines.map((l) => (
                      <div key={l}>{l}</div>
                    ))}
                  </ValueBox>
                ))}
              </ValueGrid>
            </ScopeCanvas>
            <CylinderStrip>
              {CYLINDERS.map((c) => (
                <Cylinder key={c.label} $color={c.color}>
                  <CheckBox>
                    <svg width="10" height="9" viewBox="0 0 10 9">
                      <path d="M1 5l3 3 5-7" fill="none" stroke="#3f9cf2" strokeWidth="2" />
                    </svg>
                  </CheckBox>
                  {c.label}
                </Cylinder>
              ))}
            </CylinderStrip>
          </ScopeFrame>
          <ControlRow>
            <SquareButton><RoundGlyph /></SquareButton>
            <ScaleSelect>10 мс<DownArrow /></ScaleSelect>
            <SquareButton><RoundGlyph plus /></SquareButton>
            <SquareButton><NavGlyph kind="scrollL" color="#a0a0a0" /></SquareButton>
            <Track />
            <SquareButton $w={13}><NavGlyph kind="next" color="#a0a0a0" /></SquareButton>
            <SquareButton $w={24}><NavGlyph kind="first" /></SquareButton>
            <SquareButton $w={25}><NavGlyph kind="prev" /></SquareButton>
            <Counter>27/123</Counter>
            <SquareButton $w={25}><NavGlyph kind="next" /></SquareButton>
            <SquareButton $w={23}><NavGlyph kind="last" /></SquareButton>
            <SquareButton $w={24}><NavGlyph kind="next" color="#008a1a" /></SquareButton>
          </ControlRow>
        </LeftColumn>

        <SideSplitter>
          <SideArrow />
          <SideDots />
          <SideArrow />
        </SideSplitter>

        <ChartColumn>
          {CHARTS.map((c) => (
            <ChartPanel key={c.title}>
              <ChartTitle $focus={c.focus}>{c.title}</ChartTitle>
              <Chart plot={c.plot} yTicks={c.yTicks} gridX={c.gridX} bars={c.bars} stacked={c.stacked} />
            </ChartPanel>
          ))}
        </ChartColumn>
      </Workspace>

      <BottomArea>
        <HSplitter>
          <SmallDown />
          <HDots />
          <SmallDown />
        </HSplitter>
        <Groups>
          <Group $w={252} $pad="7px 0 0 11px">
            <GroupLegend $ml={-5} $color="#003a78">Подключение</GroupLegend>
            <FieldRow>
              <FieldLabel $w={43}>Синхро:</FieldLabel>
              <SelectBox $w={187} $bold $color="#003a78">4.  Датчик первого цилинд<DownArrow /></SelectBox>
            </FieldRow>
            <FieldRow>
              <FieldLabel $w={43}>Вход:</FieldLabel>
              <SelectBox $w={187} $bold $color="#003a78">7.  Датчики DIS<DownArrow /></SelectBox>
            </FieldRow>
          </Group>
          <Group $w={211} $pad="7px 0 0 9px">
            <GroupLegend $ml={-2} $color="#007a70">Система зажигания</GroupLegend>
            <FieldRow>
              <FieldLabel $w={62}>Тип</FieldLabel>
              <SelectBox $w={98} $color="#007a70">Классика<DownArrow /></SelectBox>
            </FieldRow>
            <FieldRow>
              <FieldLabel $w={62}>Порядок</FieldLabel>
              <SelectBox $w={100}>1-3-4-2<DownArrow /></SelectBox>
              <SpinBox>
                1
                <SpinArrows>
                  <UpArrow />
                  <DownArrow />
                </SpinArrows>
              </SpinBox>
            </FieldRow>
          </Group>
          <Group $w={109} $pad="6px 0 0 9px">
            <GroupLegend $ml={-2} $color="#ff00ff">Маркеры</GroupLegend>
            <MarkerLine $h={15} $color="#f01010">M1=0°</MarkerLine>
            <MarkerLine $h={18} $color="#1010f0">M2=720°</MarkerLine>
            <MarkerLine $h={16} $color="#800080">ΔM=720°</MarkerLine>
          </Group>
          <Group $w={105} $pad="7px 0 0 8px">
            <GroupLegend $ml={-2} $color="#008000">Управление</GroupLegend>
            <RunButton>
              <svg width="11" height="21" viewBox="0 0 11 21">
                <path d="M0 0l11 10.500L0 21z" fill="#00e000" />
              </svg>
              Анализ
            </RunButton>
          </Group>
        </Groups>
      </BottomArea>

      <StatusBar>
        <StatusCell $w={188}>USB Осциллограф не подключен</StatusCell>
        <StatusCell />
      </StatusBar>

      <Taskbar>
        <StartOrb width="40" height="39" viewBox="0 0 40 39">
          <defs>
            <radialGradient id="orb" cx="0.5" cy="0.35" r="0.7">
              <stop offset="0" stopColor="#6ab4e8" />
              <stop offset="0.7" stopColor="#1c5c94" />
              <stop offset="1" stopColor="#0c2c4c" />
            </radialGradient>
          </defs>
          <circle cx="20" cy="20" r="18" fill="url(#orb)" stroke="#5ab0d8" />
          <path d="M10 13c3-2 6-1 9 0l-1 7c-3-1-6-2-9 0z" fill="#e8502c" />
          <path d="M21 13c3 1 6 2 9 0l-1 7c-3 2-6 1-9 0z" fill="#80c030" />
          <path d="M9 22c3-2 6-1 9 0l-1 7c-3-1-6-2-9 0z" fill="#3898e0" />
          <path d="M20 22c3 1 6 2 9 0l-1 7c-3 2-6 1-9 0z" fill="#f8c020" />
        </StartOrb>
        {TASK_ITEMS.map((t, i) =>
          t === "gap" ? (
            <TaskGap key={i} />
          ) : (
            <TaskItem key={i} $state={t.state}>{t.icon}</TaskItem>
          )
        )}
        <Tray>
          <TrayLang>RU</TrayLang>
          <TrayGlyphs />
          <Clock>
            <div>15:38</div>
            <div>23.03.2014</div>
          </Clock>
          <ShowDesktop />
        </Tray>
      </Taskbar>

      <NetWidget>
        <NetScreen>
          5 KB/s
          <svg width="26" height="18" viewBox="0 0 26 18">
            <path d="M2 5h5v9H2zM8 3h12v11H8z" fill="#c8ccd0" stroke="#9aa4ae" />
            <path d="M12 14h10l-5 4z" fill="#a8d0ec" />
          </svg>
        </NetScreen>
        <NetSide>
          <svg width="14" height="16" viewBox="0 0 14 16">
            <path d="M4 1h6v7h3l-6 7-6-7h3z" fill="#a8d0ec" stroke="#6ea8d8" />
          </svg>
          <svg width="14" height="12" viewBox="0 0 14 12">
            <path d="M1 2h12L7 11z" fill="#8c98a4" />
          </svg>
        </NetSide>
      </NetWidget>

      <Dialog>
        <DialogHead>
          <DialogTitle>Diamag 2</DialogTitle>
          <DialogClose>
            <svg width="14" height="11" viewBox="0 0 14 11">
              <path d="M2 1.500l10 8M12 1.500l-10 8" stroke="#5a2a28" strokeWidth="4" />
              <path d="M2 1.500l10 8M12 1.500l-10 8" stroke="#fff" strokeWidth="2.500" />
            </svg>
          </DialogClose>
        </DialogHead>
        <DialogBody>
          <DialogLine>Произошла ошибка при анализе меток синхронизации.</DialogLine>
          <DialogLine>Дальнейший анализ в автоматическом режиме не возможен.</DialogLine>
          <DialogLine $tight>Отправьте пожалуйста исходный файл на адрес usbosc@mail.ru.</DialogLine>
          <DialogLine>Мы проанализируем его и внесем корректировки в алгоритм.</DialogLine>
          <OkButton>OK</OkButton>
        </DialogBody>
      </Dialog>
    </Page>
  );
};

export default App;
